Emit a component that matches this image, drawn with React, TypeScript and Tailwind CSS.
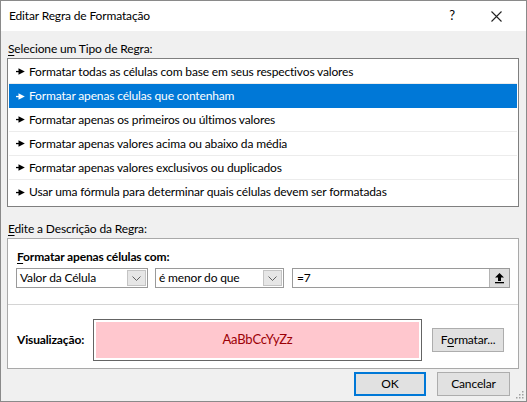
import React from 'react';

const rules = [
  'Formatar todas as células com base em seus respectivos valores',
  'Formatar apenas células que contenham',
  'Formatar apenas os primeiros ou últimos valores',
  'Formatar apenas valores acima ou abaixo da média',
  'Formatar apenas valores exclusivos ou duplicados',
  'Usar uma fórmula para determinar quais células devem ser formatadas',
];

function Pointer({ color }: { color: string }) {
  return (
    <svg width="9" height="7" viewBox="0 0 9 7" className="shrink-0">
      <rect x="0" y="2.9" width="4" height="1.3" fill={color} />
      <path d="M2.5 0.3 L8.8 3.5 L2.5 6.7 Z" fill={color} />
    </svg>
  );
}

function Chevron() {
  return (
    <svg width="9" height="5" viewBox="0 0 9 5">
      <path d="M0.5 0.5 L4.5 4.5 L8.5 0.5" fill="none" stroke="#606060" strokeWidth="1" />
    </svg>
  );
}

function Combo({ value, width }: { value: string; width: string }) {
  return (
    <div className={`${width} h-[20px] flex items-stretch border border-[#9a9a9a] bg-white`}>
      <span className="flex-1 pl-[3px] flex items-center leading-none">{value}</span>
      <div className="w-[19px] m-[1px] flex items-center justify-center bg-[#e6e6e6] border border-[#c4c4c4]">
        <Chevron />
      </div>
    </div>
  );
}

export default function App() {
  return (
    <div className="w-[527px] h-[402px] bg-[#f0f0f0] border border-[#8a8a8a] flex flex-col text-[12px] tracking-[-0.15px] text-black font-['Segoe_UI','Lato',sans-serif] relative overflow-hidden">
      {/* Title bar */}
      <div className="h-[30px] bg-white flex items-center pl-[8px] shrink-0">
        <span>Editar Regra de Formatação</span>
        <span className="ml-auto text-[13px] mr-[36px]">?</span>
        <svg width="11" height="11" viewBox="0 0 11 11" className="mr-[24px]">
          <path d="M0.5 0.5 L10.5 10.5 M10.5 0.5 L0.5 10.5" stroke="#222" strokeWidth="1.1" />
        </svg>
      </div>

      <div className="flex flex-col pl-[6px] pr-[7px]">
        <div className="mt-[10px] leading-[16px] pl-[1px]">
          <span className="underline underline-offset-2">S</span>elecione um Tipo de Regra:
        </div>

        {/* Rule type list */}
        <div className="mt-[1px] border border-[#7f7f7f] bg-white p-[1px] pb-[2px]">
          {rules.map((r, i) => {
            const selected = i === 1;
            return (
              <div
                key={r}
                className={`h-[24px] flex items-center gap-[4px] pl-[7px] ${
                  selected ? 'bg-[#0078d7] text-white' : i < rules.length - 1 ? 'border-b border-[#ececec]' : ''
                }`}
              >
                <Pointer color={selected ? '#ffffff' : '#000000'} />
                <span className="whitespace-nowrap">{r}</span>
              </div>
            );
          })}
        </div>

        <div className="mt-[14px] leading-[16px] pl-[1px]">
          <span className="underline underline-offset-2">E</span>dite a Descrição da Regra:
        </div>

        {/* Rule description */}
        <div className="mt-[1px] border border-[#a9a9a9] bg-white flex flex-col px-[8px] pt-[10px] pb-[7px]">
          <div className="leading-[16px] font-bold ml-[1px]">
            <span className="underline underline-offset-2">F</span>ormatar apenas células com:
          </div>
          <div className="mt-[3px] flex items-center">
            <Combo value="Valor da Célula" width="w-[132px]" />
            <div className="ml-[7px]">
              <Combo value="é menor do que" width="w-[129px]" />
            </div>
            <div className="ml-[8px] w-[218px] h-[20px] flex items-stretch border border-[#9a9a9a] bg-white">
              <span className="flex-1 pl-[4px] flex items-center leading-none">=7</span>
              <div className="w-[20px] flex items-center justify-center bg-[#dcdcdc] border-l border-[#b4b4b4]">
                <svg width="11" height="12" viewBox="0 0 11 12">
                  <path d="M5.5 1 L10 5.5 L7 5.5 L7 9 L4 9 L4 5.5 L1 5.5 Z" fill="#000" />
                  <rect x="1" y="10" width="9" height="1.3" fill="#000" />
                </svg>
              </div>
            </div>
          </div>

          <div className="-mx-[8px] mt-[16px] h-px bg-[#d4d4d4]" />

          <div className="mt-[14px] flex items-center">
            <span className="w-[76px] ml-[1px] font-bold">Visualização:</span>
            <div className="w-[329px] h-[42px] border border-[#646464] bg-white p-[2px]">
              <div className="w-full h-full bg-[#ffc7ce] flex items-center justify-center text-[#9c0006] text-[13px]">
                AaBbCcYyZz
              </div>
            </div>
            <button className="ml-[10px] w-[72px] h-[24px] bg-[#e1e1e1] border border-[#adadad] flex items-center justify-center">
              F<span className="underline underline-offset-2">o</span>rmatar...
            </button>
          </div>
        </div>

        {/* Dialog buttons */}
        <div className="mt-[3px] flex justify-end pr-[9px]">
          <button className="w-[72px] h-[24px] bg-[#e1e1e1] border-2 border-[#0078d7] flex items-center justify-center">
            OK
          </button>
          <button className="ml-[11px] w-[73px] h-[24px] bg-[#e1e1e1] border border-[#adadad] flex items-center justify-center">
            Cancelar
          </button>
        </div>
      </div>

      {/* Resize grip */}
      <svg width="8" height="8" viewBox="0 0 8 8" className="absolute right-[2px] bottom-[2px]">
        {[
          [6, 0],
          [6, 3],
          [3, 3],
          [6, 6],
          [3, 6],
          [0, 6],
        ].map(([x, y]) => (
          <rect key={`${x}-${y}`} x={x} y={y} width="1.5" height="1.5" fill="#a0a0a0" />
        ))}
      </svg>
    </div>
  );
}
